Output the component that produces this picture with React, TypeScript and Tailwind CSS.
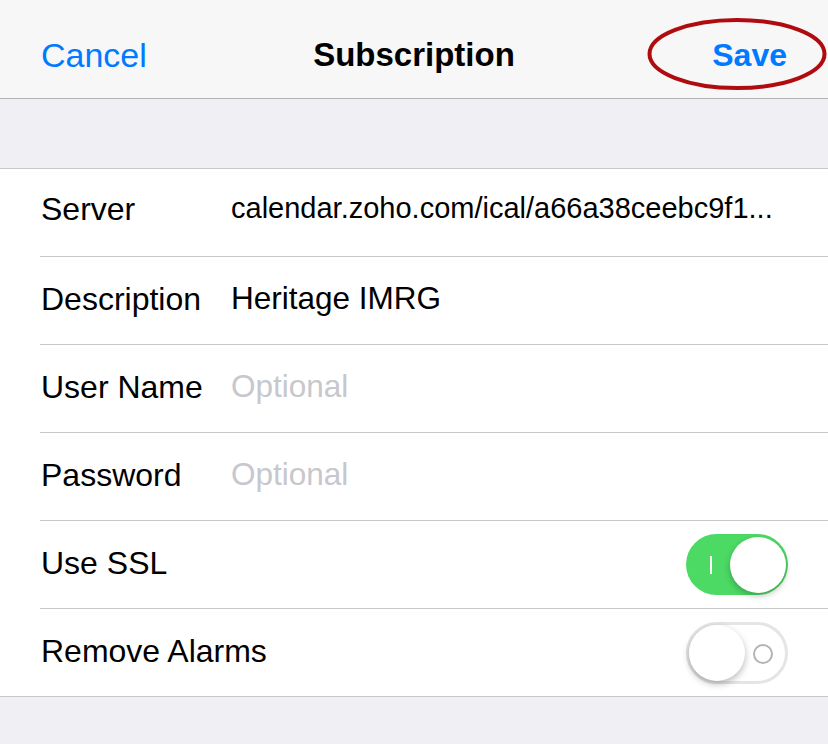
function SwitchOn() {
  return (
    <div className="relative w-[102px] h-[61px] rounded-full bg-[#4cd964]">
      <span className="absolute left-[24px] top-[22px] w-[2px] h-[18px] bg-white"></span>
      <span className="absolute right-[2px] top-[3px] w-[56px] h-[56px] rounded-full bg-white shadow-[0_3px_6px_rgba(0,0,0,0.25)]"></span>
    </div>
  );
}

function SwitchOff() {
  return (
    <div className="relative w-[102px] h-[62px] rounded-full bg-white border-[3px] border-[#e5e5e5]">
      <span className="absolute left-[64px] top-[19px] w-[20px] h-[20px] rounded-full border-2 border-[#b3b3b3]"></span>
      <span className="absolute left-0 top-0 w-[56px] h-[56px] rounded-full bg-white shadow-[0_3px_7px_rgba(0,0,0,0.28)]"></span>
    </div>
  );
}

type Row = { label: string; value?: React.ReactNode; lift?: boolean };

const rows: Row[] = [
  {
    label: "Server",
    lift: true,
    value: (
      <span className="text-[29px] text-black whitespace-nowrap">calendar.zoho.com/ical/a66a38ceebc9f1...</span>
    ),
  },
  { label: "Description", value: <span className="text-[31.5px] text-black">Heritage IMRG</span> },
  { label: "User Name", value: <span className="text-[31.5px] text-[#c7c7cd]">Optional</span> },
  { label: "Password", value: <span className="text-[31.5px] text-[#c7c7cd]">Optional</span> },
];

export default function App() {
  return (
    <div className="min-h-[744px] w-[828px] bg-[#efeff4] font-['Liberation_Sans',Arial,sans-serif] text-black overflow-hidden">
      {/* Nav bar */}
      <div className="relative h-[99px] bg-[#f7f7f8] border-b border-[#b2b2b2] grid grid-cols-[1fr_auto_1fr] items-center pt-[12px]">
        <button className="justify-self-start pl-[41px] text-[34px] text-[#007aff]">Cancel</button>
        <h1 className="text-[33px] font-bold">Subscription</h1>
        <button className="justify-self-end pr-[41px] text-[32px] font-bold text-[#007aff]">Save</button>
        <svg className="absolute left-[646px] top-[16px]" width="182" height="76" viewBox="0 0 182 76">
          <ellipse cx="91" cy="38" rx="87.5" ry="34" fill="none" stroke="#b00b0f" strokeWidth="4" />
        </svg>
      </div>

      {/* spacer */}
      <div className="h-[69px]"></div>

      {/* Form group */}
      <div className="bg-white border-y border-[#c8c7cc]">
        {rows.map((r) => (
          <div key={r.label} className="ml-[40px] border-b border-[#c8c7cc]">
            <div className={`h-[87px] flex items-center text-[32px] pl-[1px] pr-[40px] overflow-hidden ${r.lift ? "pb-[7px]" : "pb-[3px]"}`}>
              <span className="w-[190px] shrink-0">{r.label}</span>
              {r.value}
            </div>
          </div>
        ))}
        <div className="ml-[40px] border-b border-[#c8c7cc]">
          <div className="h-[87px] flex items-center justify-between text-[32px] pl-[1px] pr-[40px]">
            <span className="pb-[3px]">Use SSL</span>
            <SwitchOn />
          </div>
        </div>
        <div className="ml-[40px]">
          <div className="h-[87px] flex items-center justify-between text-[32px] pl-[1px] pr-[40px]">
            <span className="pb-[3px]">Remove Alarms</span>
            <SwitchOff />
          </div>
        </div>
      </div>
    </div>
  );
}
